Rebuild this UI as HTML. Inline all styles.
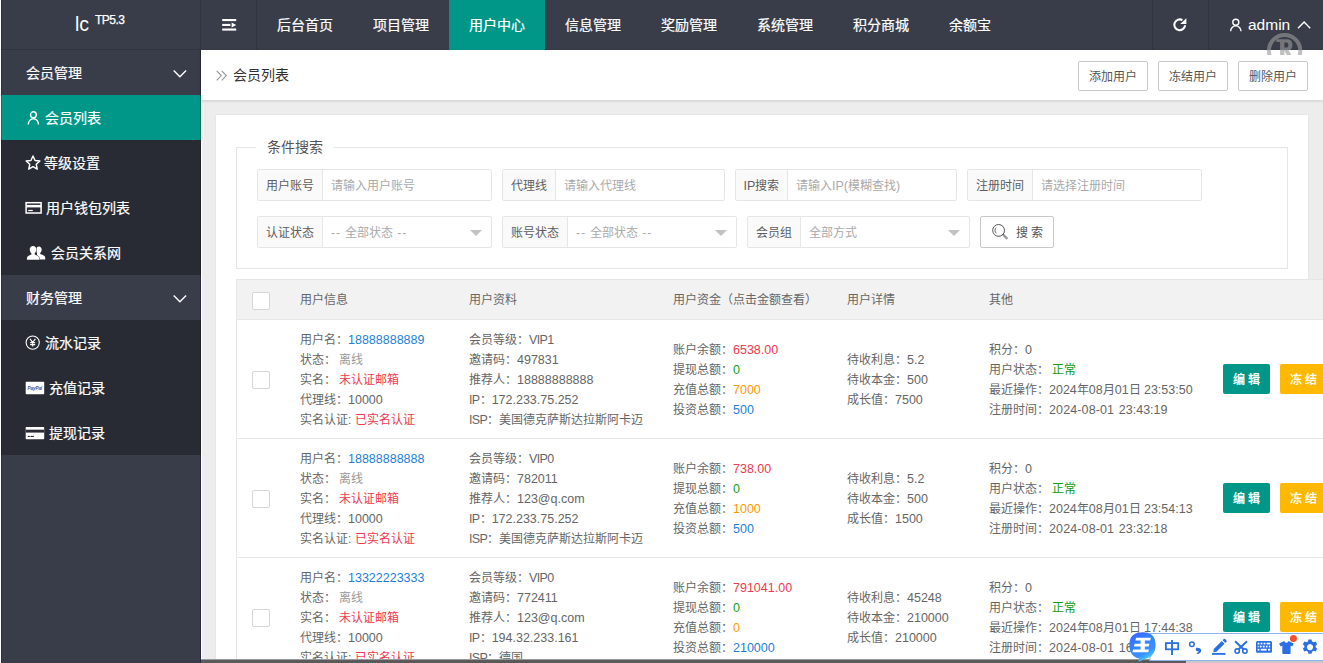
<!DOCTYPE html>
<html lang="zh-CN">
<head>
<meta charset="utf-8">
<title>会员列表</title>
<style>
*{box-sizing:border-box}
html,body{margin:0;padding:0}
body{width:1323px;height:663px;overflow:hidden;position:relative;background:#ededed;font-family:"Liberation Sans",sans-serif;font-size:14px;color:#333;line-height:1}
p{margin:0}
b{font-weight:normal}
i{font-style:normal}
svg{display:block;position:absolute}
/* header */
#hdr{position:absolute;left:1px;top:0;width:1322px;height:50px;background:#393d49}
#logo{position:absolute;left:0;top:0;width:200px;height:50px;border-bottom:1px solid #30343e;color:#fff}
#logo .a{position:absolute;left:74px;top:15px;font-size:19.5px}
#logo .b{position:absolute;left:94px;top:14px;font-size:12px;letter-spacing:-.5px;-webkit-text-stroke:.25px #fff}
#nav a{-webkit-text-stroke:.2px #fff;position:absolute;top:0;height:50px;line-height:50px;color:#fff;font-size:14px;text-align:center;width:96px}
#nav a.on{background:#009688}
.vl{position:absolute;top:0;width:1px;height:50px;background:#30343e}
#adm{position:absolute;left:1247px;top:0;line-height:50px;color:#fff;font-size:15.5px}
/* side */
#side{position:absolute;left:1px;top:50px;width:200px;height:613px;background:#393d49}
#side:after{content:"";position:absolute;right:0;top:0;width:1px;height:613px;background:rgba(0,0,0,.28)}
#ws{position:absolute;left:201px;top:50px;width:1px;height:613px;background:#fff}
#side .it{-webkit-text-stroke:.2px #fff;position:absolute;left:0;width:200px;height:45px;line-height:45px;color:#fff;font-size:14px}
#side .it span{position:absolute;top:1px}
#side .c{background:#282b33}
#side .on{background:#009688}
/* crumb */
#crumb{position:absolute;left:201px;top:50px;width:1122px;height:50px;background:#fff;box-shadow:0 1px 3px rgba(0,0,0,.14)}
#crumb .t{position:absolute;left:32px;top:0;line-height:50px;font-size:14px;color:#333}
.tb{position:absolute;top:11px;height:30px;width:70px;border:1px solid #c9c9c9;border-radius:2px;background:#fff;color:#555;font-size:12px;line-height:30px;text-align:center}
#card{position:absolute;left:216px;top:115px;width:1092px;height:548px;background:#fff;box-shadow:0 0 2px rgba(0,0,0,.08)}
/* form */
#fs{position:absolute;left:236px;top:147px;width:1052px;height:122px;border:1px solid #e6e6e6}
#lg{position:absolute;left:256px;top:138px;width:78px;height:18px;background:#fff;font-size:14px;color:#555;line-height:18px;text-align:center}
.g{position:absolute;height:32px;border:1px solid #e6e6e6;border-radius:2px;background:#fff;font-size:12px;line-height:32px}
.g .l{position:absolute;left:0;top:0;height:30px;background:#fafafa;border-right:1px solid #e6e6e6;color:#5e5e5e;text-align:center}
.g .ph{position:absolute;top:0;color:#aaa}
.g .ar{position:absolute;right:9px;top:13px;width:0;height:0;border:6px solid transparent;border-top-color:#c2c2c2;border-bottom-width:0}
/* table */
#th{position:absolute;left:236px;top:279px;width:1087px;height:41px;background:#f2f2f2;border:1px solid #e6e6e6;border-right:0;font-size:12px;color:#666}
#th span.h{position:absolute;top:1px;line-height:39px}
.cb{position:absolute;width:18px;height:18px;border:1px solid #d6d6d6;border-radius:2px;background:#fff}
.row{position:absolute;left:236px;width:1087px;height:119px;border-left:1px solid #e6e6e6;border-bottom:1px solid #e6e6e6;background:#fff;font-size:12px;color:#666}
.cell{position:absolute;white-space:nowrap}
.cell p{height:20px;line-height:20px;position:relative;top:1px}
.n{font-size:12.5px}
.u{font-size:12.5px;letter-spacing:-.6px}
.d{letter-spacing:.9px}
.bl{color:#1e7fdb}.rd{color:#f2394c}.gn{color:#10a010}.or{color:#ff9800}.gy{color:#999}
.btn{-webkit-text-stroke:.3px #fff;position:absolute;height:30px;width:47px;border-radius:2px;color:#fff;font-size:12px;line-height:32px;text-align:center}
.b1{background:#009688}.b2{background:#ffb800}
#sbar{position:absolute;left:201px;top:659px;width:1122px;height:4px;background:#c8c8c8;border-top:1px solid #e4e4e4}
#sbar div{position:absolute;left:0;top:-1px;width:985px;height:4px;background:#5a5a5a;border-top:1px solid #9b9b9b}
#wm{position:absolute;left:1265px;top:32px;width:40px;height:23px;overflow:hidden}
#ime{position:absolute;left:1128px;top:631px;width:195px;height:32px}
#lw{position:absolute;left:0;top:0;width:1px;height:663px;background:#fff}
#ld{position:absolute;left:1px;top:0;width:1px;height:663px;background:rgba(0,0,0,.18)}
.hy{letter-spacing:.12px}
.sp{letter-spacing:1.2px;font-size:12.5px}

</style>
</head>
<body>
<div id="hdr">
  <div id="logo"><span class="a">lc</span><span class="b">TP5.3</span></div>
  <svg style="left:221px;top:19px" width="15" height="12" viewBox="0 0 15 12" fill="#fff"><rect x="0.2" y="0" width="14" height="2.1"/><rect x="0.2" y="4.9" width="8.2" height="2.1"/><path d="M9.6 3.4L14.2 6L9.6 8.6z"/><rect x="0.2" y="9.5" width="14" height="2.1"/></svg>
  <div class="vl" style="left:199px"></div>
  <div class="vl" style="left:255px"></div>
  <div id="nav">
    <a style="left:256px">后台首页</a>
    <a style="left:352px">项目管理</a>
    <a class="on" style="left:448px">用户中心</a>
    <a style="left:544px">信息管理</a>
    <a style="left:640px">奖励管理</a>
    <a style="left:736px">系统管理</a>
    <a style="left:832px">积分商城</a>
    <a style="left:928px;width:82px">余额宝</a>
  </div>
  <div class="vl" style="left:1151px"></div>
  <div class="vl" style="left:1207px"></div>

  <svg style="left:1171px;top:17px" width="17" height="16" viewBox="0 0 17 16"><path d="M13.08 8.27A5.4 5.4 0 1 1 10.4 3.12" fill="none" stroke="#fff" stroke-width="2.1"/><path d="M14.4 1.3V6.9H8.2z" fill="#fff"/></svg>
  <svg style="left:1228px;top:17px" width="14" height="16" viewBox="0 0 14 16" fill="none" stroke="#fff" stroke-width="1.4"><circle cx="6.8" cy="5.2" r="3"/><path d="M1.6 14.3a5.2 5.4 0 0 1 10.4 0"/></svg>
  <svg style="left:1295px;top:20px" width="16" height="10" viewBox="0 0 16 10" fill="none" stroke="#fff" stroke-width="1.4"><path d="M2 8.2L8.1 2L14.2 8.2"/></svg>
  <span id="adm">admin</span>
</div>
<div id="side">
  <div class="it p" style="top:0"><span style="left:25px">会员管理</span><svg style="left:170.500px;top:19px" width="16" height="10" viewBox="0 0 16 10" fill="none" stroke="#fff" stroke-width="1.4"><path d="M1.7 1.6L7.9 7.8L14.1 1.6"/></svg></div>
  <div class="it c on" style="top:45px"><svg style="left:26px;top:15px" width="14" height="16" viewBox="0 0 14 16" fill="none" stroke="#fff" stroke-width="1.45"><circle cx="6.4" cy="4.7" r="2.9"/><path d="M1.3 14.400a5.100 5.700 0 0 1 10.200 0"/></svg><span style="left:44px">会员列表</span></div>
  <div class="it c" style="top:90px"><svg style="left:24px;top:15px" width="16" height="16" viewBox="0 0 16 16" fill="none" stroke="#fff" stroke-width="1.35" stroke-linejoin="round"><path transform="translate(8 8) scale(1.09) translate(-8 -8.200)" d="M8 1.800L9.900 5.900L14.300 6.400L11 9.400L11.900 13.800L8 11.600L4.100 13.800L5 9.400L1.700 6.400L6.100 5.900z"/></svg><span style="left:43px">等级设置</span></div>
  <div class="it c" style="top:135px"><svg style="left:24px;top:16px" width="18" height="14" viewBox="0 0 18 14"><rect x="1.1" y="1.7" width="15" height="10.3" fill="none" stroke="#fff" stroke-width="1.5"/><rect x="1" y="3.9" width="15.2" height="2.5" fill="#fff"/><rect x="3.2" y="8.9" width="4.6" height="1.2" fill="#fff"/></svg><span style="left:45px">用户钱包列表</span></div>
  <div class="it c" style="top:180px"><svg style="left:25px;top:15px" width="20" height="16" viewBox="0 0 20 16" fill="#fff"><path d="M12.9 1.4c1.700 0 2.800 1.300 2.800 3.200 0 1.400-.6 2.700-1.500 3.400v1c2.300.8 5 1.700 5 3.600V14.600H11V8c-.5-.7-.9-1.800-.9-3.200 0-2 1.100-3.400 2.800-3.400z"/><path d="M7 1c2.100 0 3.400 1.500 3.400 3.600 0 1.500-.7 2.900-1.700 3.700v1.100c2.600.9 4.500 1.900 4.500 4V14.700H.9v-1.300c0-2.100 1.900-3.100 4.500-4V8.300C4.400 7.500 3.700 6.100 3.700 4.600 3.700 2.500 5 1 7 1z" stroke="#282b33" stroke-width=".9" paint-order="stroke"/></svg><span style="left:50px">会员关系网</span></div>
  <div class="it p" style="top:225px"><span style="left:25px">财务管理</span><svg style="left:170.500px;top:19px" width="16" height="10" viewBox="0 0 16 10" fill="none" stroke="#fff" stroke-width="1.4"><path d="M1.7 1.6L7.9 7.8L14.1 1.6"/></svg></div>
  <div class="it c" style="top:270px"><svg style="left:23px;top:14px" width="17" height="17" viewBox="0 0 17 17" fill="none" stroke="#fff"><circle cx="8.7" cy="8.6" r="6.6" stroke-width="1.1"/><path d="M6 4.800L8.700 8.400L11.400 4.800M8.700 8.400V12.600M6.200 8.600H11.200M6.200 10.600H11.200" stroke-width="1.1"/></svg><span style="left:44px">流水记录</span></div>
  <div class="it c" style="top:315px"><svg style="left:24px;top:16px" width="20" height="14" viewBox="0 0 20 14"><rect x=".7" y=".7" width="18.5" height="12.500" rx=".8" fill="#fff"/><text x="2.600" y="8.600" font-family="Liberation Sans, sans-serif" font-size="4.600" font-style="italic" font-weight="bold" fill="#4a4f8e" textLength="14.500">PayPal</text></svg><span style="left:48px">充值记录</span></div>
  <div class="it c" style="top:360px"><svg style="left:24px;top:16px" width="20" height="14" viewBox="0 0 20 14"><rect x=".7" y="1" width="18.5" height="12.3" rx=".7" fill="#fff"/><rect x=".7" y="3.7" width="18.5" height="2.9" fill="#282b33"/><rect x="2.8" y="9.9" width="2" height="1.1" fill="#282b33"/><rect x="5.5" y="9.9" width="3.4" height="1.1" fill="#282b33"/></svg><span style="left:48px">提现记录</span></div>
</div>
<div id="ws"></div>
<div id="crumb">
  <svg style="left:14px;top:19px" width="14" height="13" viewBox="0 0 14 13" fill="none" stroke="#999" stroke-width="1.200"><path d="M1.700 1.800L6.300 6.600L1.700 11.400M6.700 1.800L11.300 6.600L6.700 11.400"/></svg><span class="t">会员列表</span>
  <span class="tb" style="left:877px">添加用户</span>
  <span class="tb" style="left:957px">冻结用户</span>
  <span class="tb" style="left:1037px">删除用户</span>
</div>
<div id="card"></div>
<div id="fs"></div>
<div id="lg">条件搜索</div>
<div class="g" style="left:257px;top:169px;width:235px"><span class="l" style="width:65px">用户账号</span><span class="ph" style="left:73px">请输入用户账号</span></div>
<div class="g" style="left:502px;top:169px;width:223px"><span class="l" style="width:53px">代理线</span><span class="ph" style="left:61px">请输入代理线</span></div>
<div class="g" style="left:735px;top:169px;width:222px"><span class="l" style="width:52px"><span class="n">IP</span>搜索</span><span class="ph" style="left:60px">请输入<span class="n">IP(</span>模糊查找<span class="n">)</span></span></div>
<div class="g" style="left:967px;top:169px;width:235px"><span class="l" style="width:65px">注册时间</span><span class="ph" style="left:73px">请选择注册时间</span></div>
<div class="g" style="left:257px;top:216px;width:235px"><span class="l" style="width:65px">认证状态</span><span class="ph" style="left:73px"><span class="d">-- </span>全部状态<span class="d"> --</span></span><span class="ar"></span></div>
<div class="g" style="left:502px;top:216px;width:235px"><span class="l" style="width:65px">账号状态</span><span class="ph" style="left:73px"><span class="d">-- </span>全部状态<span class="d"> --</span></span><span class="ar"></span></div>
<div class="g" style="left:747px;top:216px;width:223px"><span class="l" style="width:53px">会员组</span><span class="ph" style="left:61px">全部方式</span><span class="ar"></span></div>
<div class="g" id="sb" style="left:980px;top:216px;width:74px;border-color:#c9c9c9"><svg style="left:8px;top:5px" width="22" height="22" viewBox="0 0 22 22" fill="none" stroke="#555" stroke-width="1"><circle cx="9.600" cy="8.400" r="5.900"/><path d="M7.300 5.600a3.600 3.600 0 0 0 0 5.600" stroke-width=".9"/><path d="M13.600 13l.9-.9 3.700 3.700a.64.64 0 0 1-.9.900z"/></svg><span style="position:absolute;left:35px;top:0;color:#555">搜 索</span></div>
<div id="th">
  <span class="cb" style="left:15px;top:12px"></span>
  <span class="h" style="left:63px">用户信息</span>
  <span class="h" style="left:232px">用户资料</span>
  <span class="h" style="left:436px">用户资金（点击金额查看）</span>
  <span class="h" style="left:610px">用户详情</span>
  <span class="h" style="left:752px">其他</span>
</div>
<div class="row" style="top:320px">
<span class="cb" style="left:15px;top:51px"></span>
<div class="cell" style="left:63px;top:9px">
<p>用户名：<b class="bl"><span class="n">18888888889</span></b></p>
<p>状态： <i class="gy">离线</i></p>
<p>实名： <b class="rd">未认证邮箱</b></p>
<p>代理线：<span class="n">10000</span></p>
<p>实名认证: <b class="rd">已实名认证</b></p>
</div>
<div class="cell" style="left:232px;top:9px">
<p>会员等级：<span class="u">VIP</span><span class="n">1</span></p>
<p>邀请码：<span class="n">497831</span></p>
<p>推荐人：<span class="n">18888888888</span></p>
<p><span class="u">IP</span>：<span class="n">172.233.75.252</span></p>
<p><span class="u">ISP</span>：美国德克萨斯达拉斯阿卡迈</p>
</div>
<div class="cell" style="left:436px;top:19px">
<p>账户余额：<b class="rd"><span class="n">6538.00</span></b></p>
<p>提现总额：<b class="gn"><span class="n">0</span></b></p>
<p>充值总额：<b class="or"><span class="n">7000</span></b></p>
<p>投资总额：<b class="bl"><span class="n">500</span></b></p>
</div>
<div class="cell" style="left:610px;top:29px">
<p>待收利息：<span class="n">5.2</span></p>
<p>待收本金：<span class="n">500</span></p>
<p>成长值：<span class="n">7500</span></p>
</div>
<div class="cell" style="left:752px;top:19px">
<p>积分：<span class="n">0</span></p>
<p>用户状态： <b class="gn">正常</b></p>
<p>最近操作：<span class="n">2024</span>年<span class="n">08</span>月<span class="n">01</span>日 <span class="n">23:53:50</span></p>
<p>注册时间：<span class="n hy">2024-08-01</span><span class="sp"> </span><span class="n">23:43:19</span></p>
</div>
<span class="btn b1" style="left:986px;top:44px">编 辑</span>
<span class="btn b2" style="left:1043px;top:44px">冻 结</span>
</div>
<div class="row" style="top:439px">
<span class="cb" style="left:15px;top:51px"></span>
<div class="cell" style="left:63px;top:9px">
<p>用户名：<b class="bl"><span class="n">18888888888</span></b></p>
<p>状态： <i class="gy">离线</i></p>
<p>实名： <b class="rd">未认证邮箱</b></p>
<p>代理线：<span class="n">10000</span></p>
<p>实名认证: <b class="rd">已实名认证</b></p>
</div>
<div class="cell" style="left:232px;top:9px">
<p>会员等级：<span class="u">VIP</span><span class="n">0</span></p>
<p>邀请码：<span class="n">782011</span></p>
<p>推荐人：<span class="n">123@q.com</span></p>
<p><span class="u">IP</span>：<span class="n">172.233.75.252</span></p>
<p><span class="u">ISP</span>：美国德克萨斯达拉斯阿卡迈</p>
</div>
<div class="cell" style="left:436px;top:19px">
<p>账户余额：<b class="rd"><span class="n">738.00</span></b></p>
<p>提现总额：<b class="gn"><span class="n">0</span></b></p>
<p>充值总额：<b class="or"><span class="n">1000</span></b></p>
<p>投资总额：<b class="bl"><span class="n">500</span></b></p>
</div>
<div class="cell" style="left:610px;top:29px">
<p>待收利息：<span class="n">5.2</span></p>
<p>待收本金：<span class="n">500</span></p>
<p>成长值：<span class="n">1500</span></p>
</div>
<div class="cell" style="left:752px;top:19px">
<p>积分：<span class="n">0</span></p>
<p>用户状态： <b class="gn">正常</b></p>
<p>最近操作：<span class="n">2024</span>年<span class="n">08</span>月<span class="n">01</span>日 <span class="n">23:54:13</span></p>
<p>注册时间：<span class="n hy">2024-08-01</span><span class="sp"> </span><span class="n">23:32:18</span></p>
</div>
<span class="btn b1" style="left:986px;top:44px">编 辑</span>
<span class="btn b2" style="left:1043px;top:44px">冻 结</span>
</div>
<div class="row" style="top:558px">
<span class="cb" style="left:15px;top:51px"></span>
<div class="cell" style="left:63px;top:9px">
<p>用户名：<b class="bl"><span class="n">13322223333</span></b></p>
<p>状态： <i class="gy">离线</i></p>
<p>实名： <b class="rd">未认证邮箱</b></p>
<p>代理线：<span class="n">10000</span></p>
<p>实名认证: <b class="rd">已实名认证</b></p>
</div>
<div class="cell" style="left:232px;top:9px">
<p>会员等级：<span class="u">VIP</span><span class="n">0</span></p>
<p>邀请码：<span class="n">772411</span></p>
<p>推荐人：<span class="n">123@q.com</span></p>
<p><span class="u">IP</span>：<span class="n">194.32.233.161</span></p>
<p><span class="u">ISP</span>：德国</p>
</div>
<div class="cell" style="left:436px;top:19px">
<p>账户余额：<b class="rd"><span class="n">791041.00</span></b></p>
<p>提现总额：<b class="gn"><span class="n">0</span></b></p>
<p>充值总额：<b class="or"><span class="n">0</span></b></p>
<p>投资总额：<b class="bl"><span class="n">210000</span></b></p>
</div>
<div class="cell" style="left:610px;top:29px">
<p>待收利息：<span class="n">45248</span></p>
<p>待收本金：<span class="n">210000</span></p>
<p>成长值：<span class="n">210000</span></p>
</div>
<div class="cell" style="left:752px;top:19px">
<p>积分：<span class="n">0</span></p>
<p>用户状态： <b class="gn">正常</b></p>
<p>最近操作：<span class="n">2024</span>年<span class="n">08</span>月<span class="n">01</span>日 <span class="n">17:44:38</span></p>
<p>注册时间：<span class="n hy">2024-08-01</span><span class="sp"> </span><span class="n">16:30:05</span></p>
</div>
<span class="btn b1" style="left:986px;top:44px">编 辑</span>
<span class="btn b2" style="left:1043px;top:44px">冻 结</span>
</div>
<div id="lw"></div><div id="ld"></div>
<div id="sbar"><div></div></div>
<div id="wm"><svg style="left:0;top:0" width="40" height="23" viewBox="0 0 40 23"><circle cx="19.600" cy="18.800" r="15.700" fill="none" stroke="#9a9a9a" stroke-opacity=".62" stroke-width="4"/><path fill="#9a9a9a" fill-opacity=".62" fill-rule="evenodd" d="M11.4 7.2H22C25.6 7.2 27.4 9.600 27.400 12.900C27.400 15.600 26 17.600 23.600 18.300L28.600 27H23.800L19.400 18.800V27H15.100V10H11.400zM19.400 10.400V15.600H21.400C22.800 15.600 23.400 14.600 23.400 13C23.400 11.400 22.800 10.400 21.400 10.400z"/></svg></div>
<div id="ime">
<svg style="left:0;top:0" width="195" height="32" viewBox="0 0 195 32">
<defs><linearGradient id="bg1" x1="0" y1="0" x2=".5" y2="1"><stop offset="0" stop-color="#3b5bff"/><stop offset=".45" stop-color="#3385ff"/><stop offset=".8" stop-color="#3a90ff"/><stop offset="1" stop-color="#45d0ff"/></linearGradient></defs>
<rect x="22" y="2.500" width="174" height="27" fill="#fff" stroke="#8fb2ee" stroke-width="1"/>
<path d="M14.700 1.200C22 1.200 27.600 4 27.600 13.800C27.600 22.500 23 26.800 18 27.600L10.600 31L11.200 27.600C5 26.500 1.400 22 1.400 13.800C1.400 4 7.400 1.200 14.700 1.200z" fill="url(#bg1)"/>
<g fill="#fff"><path d="M8.200 6.800H23L22.200 9.500H7.400z"/><path d="M6.700 12.700H21.500L20.700 15.400H5.900z"/><path d="M5.200 18.600H21L20.200 21.300H4.400z"/><rect x="12.600" y="7" width="4.200" height="14"/></g>
<g fill="none" stroke="#2a6fe3">
<rect x="37.900" y="12.100" width="12.300" height="6.200" stroke-width="1.800"/><path d="M44 9.100V24" stroke-width="1.900"/>
<circle cx="63.900" cy="13.300" r="2.300" stroke-width="1.500"/>
<path d="M84 22.900H97.500" stroke-width="1.900"/>
<circle cx="109.200" cy="20.100" r="2.200" stroke-width="1.600"/><circle cx="116.900" cy="20.100" r="2.200" stroke-width="1.600"/>
<path d="M110.600 18.300L119 10.200M115.500 18.300L107.100 10.200" stroke-width="2"/>
</g>
<g fill="#2a6fe3">
<path d="M68.200 16.800c2.600-.6 5 .6 5 2.700 0 2-1.700 3.300-4.200 3.600l-.4-1c1.300-.3 2-1 2-1.800-1.500.3-2.900-.5-2.900-1.800 0-.8.200-1.400.500-1.700z"/>
<path d="M85.300 21.300l.5-3.200L93.800 10.100l2.700 2.700L88.500 20.800zM94.600 9.300l1.200-1.200c.4-.4 1-.4 1.400 0l1.300 1.300c.4.4.4 1 0 1.400L97.300 12z"/>
<path d="M129.600 10H142.400c.9 0 1.600.7 1.600 1.600V20.200c0 .9-.7 1.600-1.600 1.600H129.600c-.9 0-1.600-.7-1.600-1.600V11.600c0-.9.7-1.600 1.600-1.600z"/>
<path d="M156.3 10C156.8 11.2 157.5 11.8 158.4 11.8S160 11.2 160.5 10L165.7 12.4L164.2 15.6L162.6 14.8V22C162.6 22.5 162.2 22.9 161.7 22.9H155.2C154.7 22.9 154.3 22.5 154.3 22V14.8L152.7 15.6L151.1 12.4z"/>
<path transform="translate(182 16.1) scale(1.1) translate(-182 -16.1)" d="M180.600 9.100h2.800l.5 1.900 1.300.7 1.900-.6 1.400 2.400-1.400 1.400v1.400l1.400 1.400-1.400 2.400-1.900-.6-1.300.8-.5 1.900h-2.800l-.5-1.900-1.300-.8-1.900.6-1.400-2.400 1.400-1.400v-1.400l-1.400-1.400 1.400-2.400 1.900.6 1.300-.7zM182 13.300a2.800 2.800 0 1 0 .01 0z" fill-rule="evenodd"/>
</g>
<g fill="#fff"><rect x="129.600" y="11.700" width="1.800" height="1.700"/><rect x="132.600" y="11.700" width="1.800" height="1.700"/><rect x="135.600" y="11.700" width="1.800" height="1.700"/><rect x="138.600" y="11.700" width="3.600" height="1.700"/>
<rect x="129.600" y="14.700" width="1" height="1.700"/><rect x="131.800" y="14.700" width="1.800" height="1.700"/><rect x="134.800" y="14.700" width="1.800" height="1.700"/><rect x="137.800" y="14.700" width="1.800" height="1.700"/><rect x="140.800" y="14.700" width="1.400" height="1.700"/>
<rect x="129.600" y="17.800" width="1.800" height="1.800"/><rect x="132.700" y="17.800" width="6" height="1.800"/><rect x="140" y="17.800" width="2.200" height="1.800"/></g>
<circle cx="165.400" cy="7.500" r="3.500" fill="#f5512f"/>
</svg>
</div>
</body>
</html>
